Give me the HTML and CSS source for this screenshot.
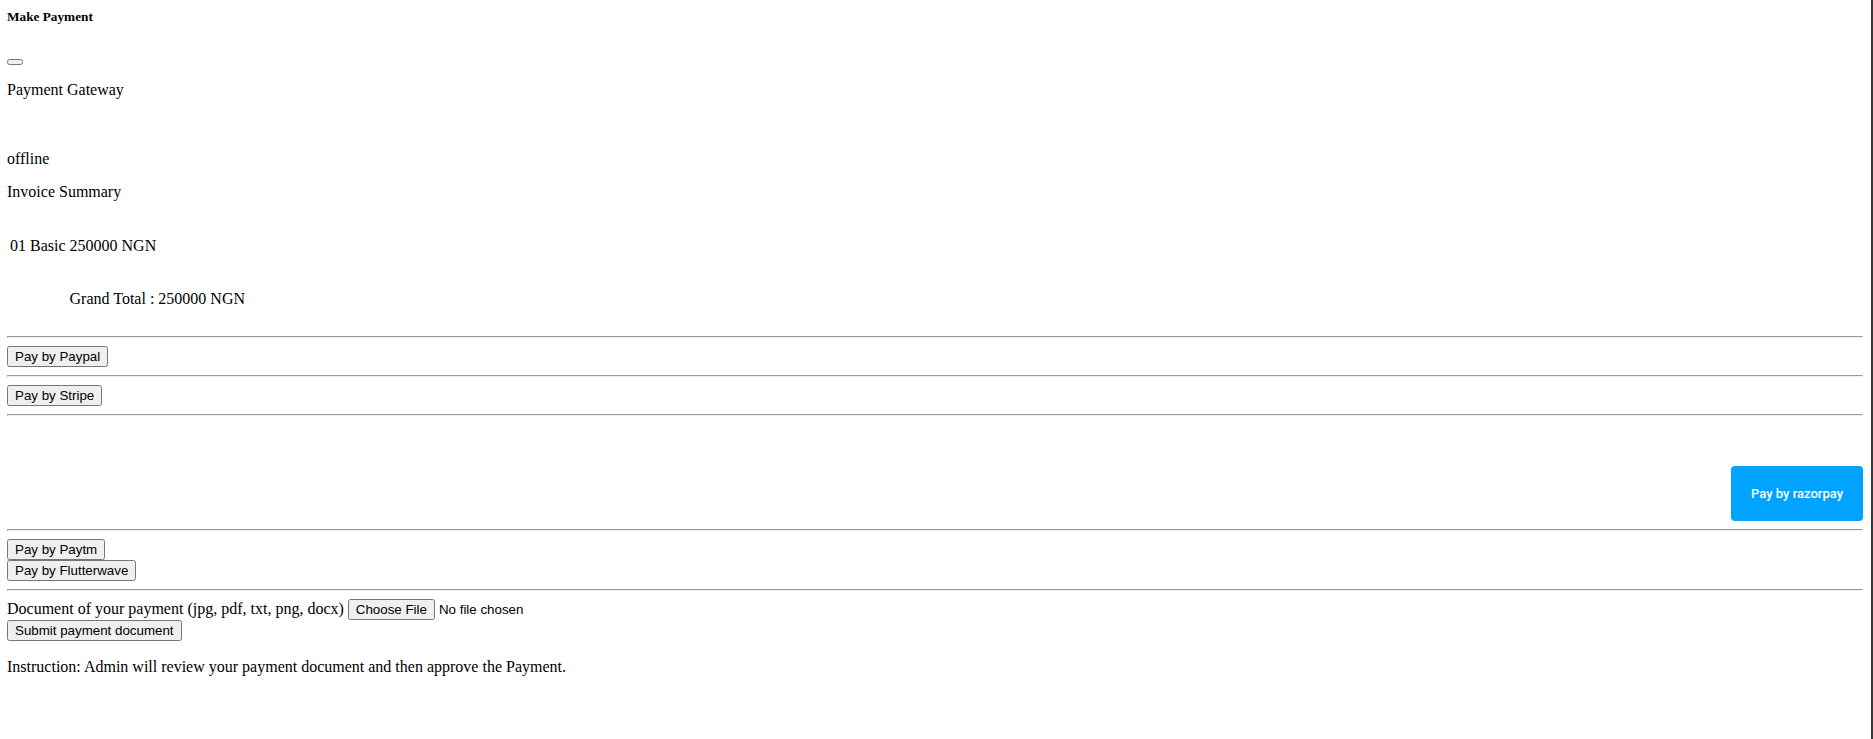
FILE: index.html
```html
<!DOCTYPE html>
<html lang="en">
<head>
<meta charset="utf-8">
<title>Make Payment</title>
<link rel="stylesheet" href="styles.css">
</head>
<body>
<div class="page">
  <h5 class="title">Make Payment</h5>
  <button class="close-btn" type="button"></button>
  <p class="gateway">Payment Gateway</p>
  <div class="mode">offline</div>
  <div class="summary">Invoice Summary</div>
  <table class="invoice">
    <tr><td>01</td><td>Basic</td><td>250000 NGN</td></tr>
    <tr><td></td><td></td><td>Grand Total : 250000 NGN</td></tr>
  </table>
  <hr class="rule">
  <form class="pay-line"><button class="sys-btn" type="button">Pay by Paypal</button></form>
  <hr class="rule">
  <form class="pay-line"><button class="sys-btn" type="button">Pay by Stripe</button></form>
  <hr class="rule">
  <div class="razor-row"><button class="razor-btn" type="button">Pay by razorpay</button></div>
  <hr class="rule">
  <form class="pay-line"><button class="sys-btn" type="button">Pay by Paytm</button></form>
  <form class="pay-line"><button class="sys-btn" type="button">Pay by Flutterwave</button></form>
  <hr class="rule">
  <form class="doc-form">Document of your payment (jpg, pdf, txt, png, docx) <input class="file-input" type="file"><br><button class="sys-btn" type="button">Submit payment document</button></form>
  <p class="instruction">Instruction: Admin will review your payment document and then approve the Payment.</p>
</div>
</body>
</html>
```
FILE: styles.css
```css
html {
  min-height: 100%;
  box-sizing: border-box;
  border-right: 2px solid #393939;
  background: #fff;
}

body {
  margin: 0;
  font-family: "Liberation Serif", "Times New Roman", serif;
  font-size: 16px;
  color: #000;
}

.page {
  padding: 9px 8px 8px 7px;
}

.title {
  margin: 0;
  font-size: 13.28px;
  font-weight: bold;
}

.close-btn {
  display: block;
  margin: 34px 0 0;
}

.gateway {
  margin: 16px 0 0;
}

.mode {
  margin-top: 51px;
}

.summary {
  margin-top: 15px;
}

.invoice {
  margin: 18px 0 9px;
  border-spacing: 2px;
}

.invoice td {
  padding: 16px 1px 17px;
  font-size: 16px;
}

.rule {
  margin: 8px 0;
}

.pay-line {
  margin: 0;
}

.sys-btn,
.file-input {
  font-family: "Liberation Sans", Arial, sans-serif;
  font-size: 13.333px;
}

.razor-row {
  display: flex;
  justify-content: flex-end;
  padding-top: 42px;
}

.razor-btn {
  font-family: Roboto, "Liberation Sans", sans-serif;
  font-size: 13px;
  font-weight: 500;
  line-height: 15px;
  color: #fff;
  background: #00a3ff;
  border: 0;
  border-radius: 4px;
  padding: 20px;
}

.doc-form {
  margin: 0;
}

.instruction {
  margin: 17px 0 0;
}
```
